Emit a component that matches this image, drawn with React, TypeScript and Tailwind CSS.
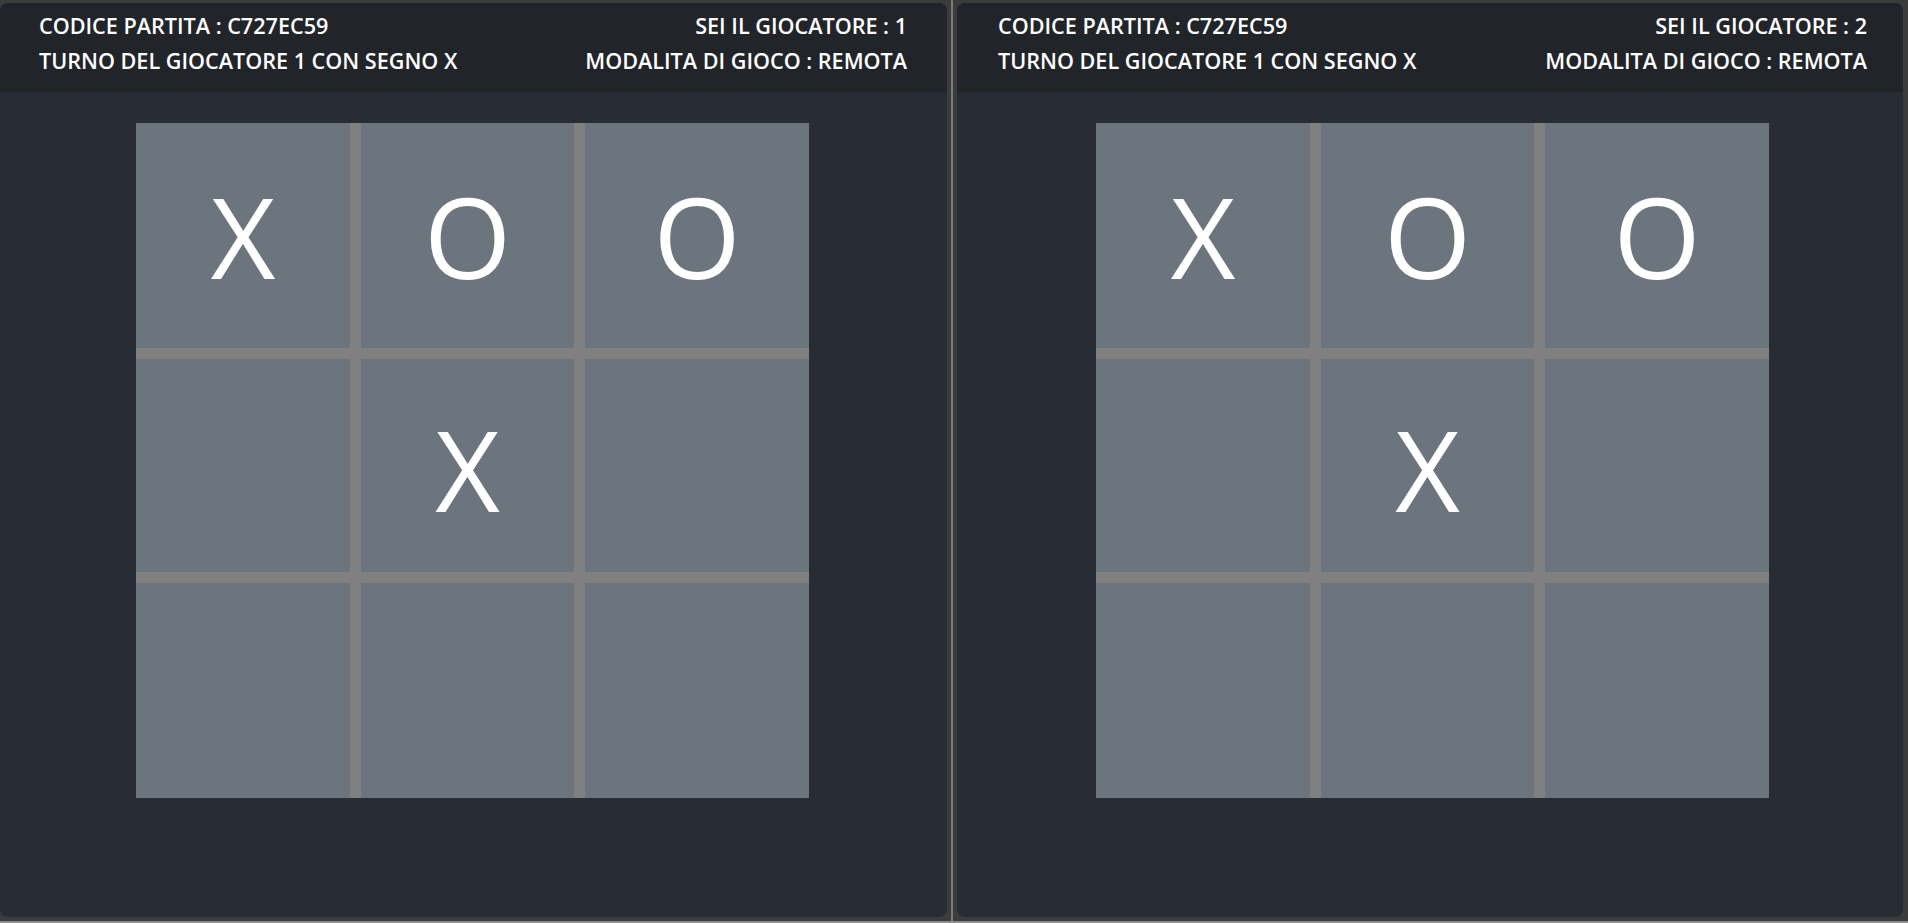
import React from "react";

const board: string[] = ["X", "O", "O", "", "X", "", "", "", ""];

function Panel({
  width,
  player,
  headerPad,
  boardPad,
}: {
  width: string;
  player: number;
  headerPad: string;
  boardPad: string;
}) {
  return (
    <div className={`${width} h-full rounded-[8px] overflow-hidden flex flex-col bg-[#282c34]`}>
      <div
        className={`h-[89px] shrink-0 bg-[#212529] ${headerPad} pt-[5px] text-white text-[21.6px] leading-[35px] font-semibold`}
        style={{ fontFamily: '"Open Sans", "Noto Sans", sans-serif' }}
      >
        <div className="flex justify-between">
          <span>CODICE PARTITA : C727EC59</span>
          <span>SEI IL GIOCATORE : {player}</span>
        </div>
        <div className="flex justify-between">
          <span>TURNO DEL GIOCATORE 1 CON SEGNO X</span>
          <span>MODALITA DI GIOCO : REMOTA</span>
        </div>
      </div>
      <div className={`flex justify-center pt-[31px] ${boardPad}`}>
        <div className="grid grid-cols-[214px_213px_224px] grid-rows-[225px_213px_215px] gap-[11px] bg-[#808080]">
          {board.map((m, i) => (
            <div
              key={i}
              className={`bg-[#6c757d] flex items-center justify-center ${
                i < 3 ? "pt-[0px]" : "pt-[6px]"
              } text-white text-[112px] leading-none font-normal`}
              style={{ fontFamily: '"Open Sans", "Noto Sans", sans-serif' }}
            >
              {m}
            </div>
          ))}
        </div>
      </div>
    </div>
  );
}

export default function App() {
  return (
    <div className="w-[1908px] h-[923px] bg-[#3b3b3b] flex flex-col overflow-hidden">
      <div className="flex flex-1 min-h-0 pt-[3px] pb-[4px]">
        <Panel width="w-[947px]" player={1} headerPad="pl-[39px] pr-[40px]" boardPad="pr-[2px]" />
        <div className="w-[10px] flex justify-center -mt-[3px] -mb-[4px]">
          <div className="w-[2px] bg-[#7a7a7a]" />
        </div>
        <Panel width="w-[946px]" player={2} headerPad="pl-[41px] pr-[36px]" boardPad="pl-[5px]" />
      </div>
      <div className="h-[2px] bg-[#8c8c8c]" />
    </div>
  );
}
